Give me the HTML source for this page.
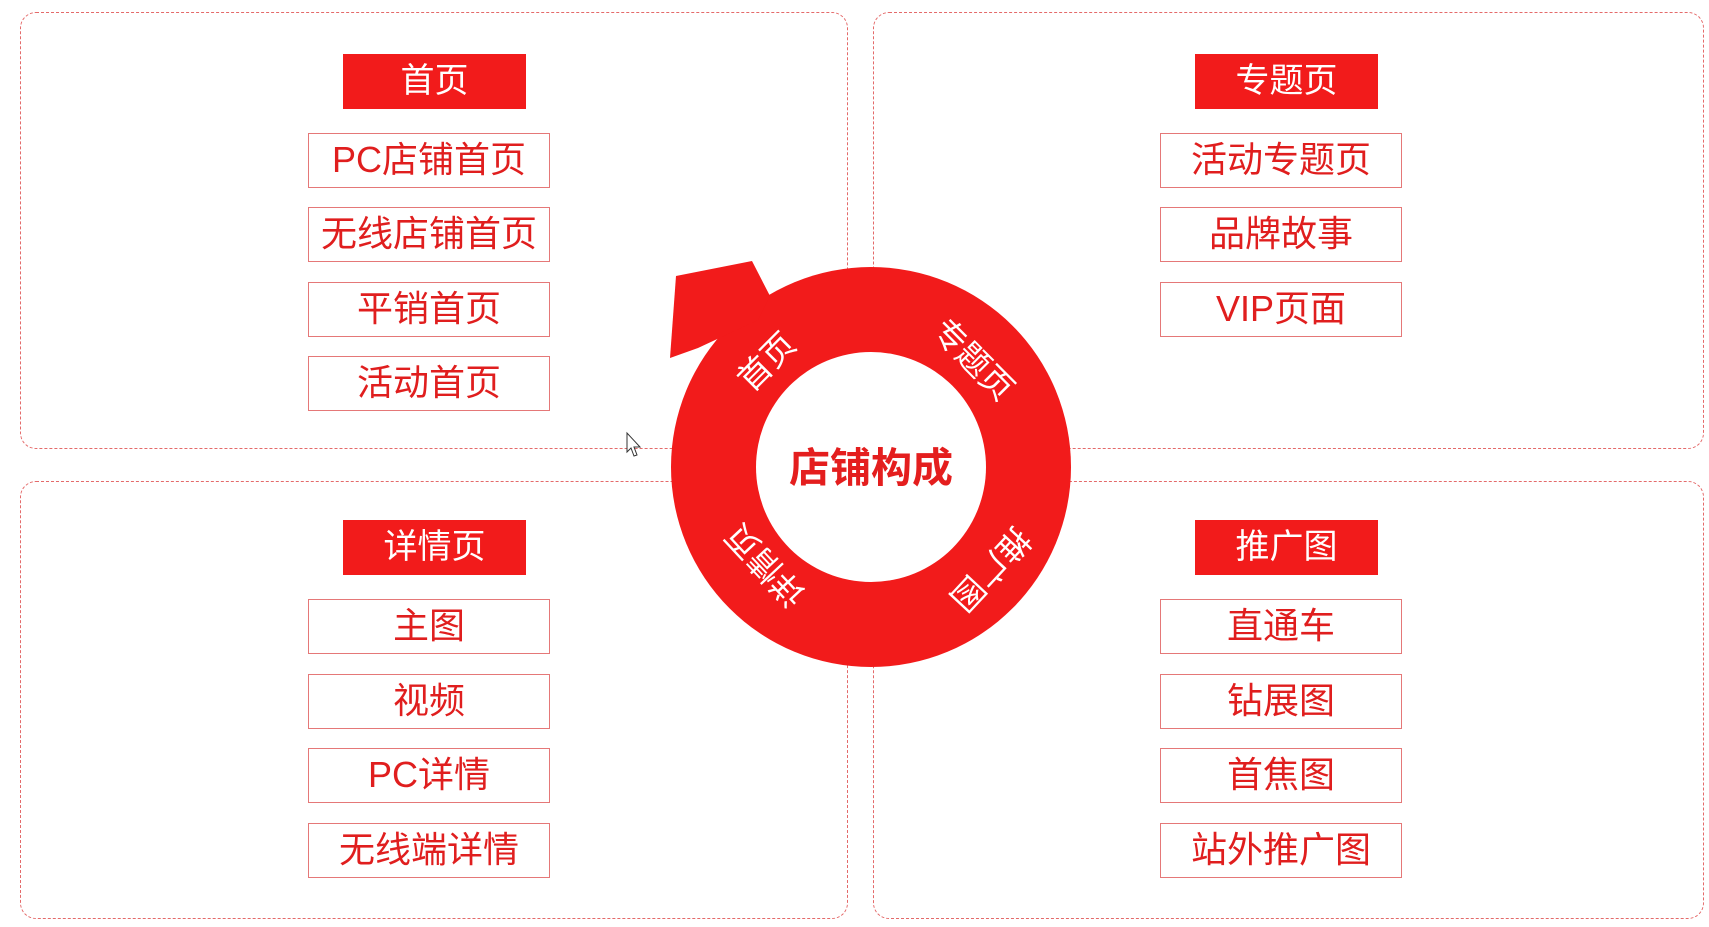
<!DOCTYPE html>
<html><head><meta charset="utf-8"><style>
html,body{margin:0;padding:0;background:#fff;width:1709px;height:927px;overflow:hidden;position:relative;font-family:"Liberation Sans","Noto Sans CJK SC",sans-serif}
.box{position:absolute;border:1.3px dashed #e46a6a;border-radius:16px;box-sizing:border-box}
.hd{position:absolute;background:#f21b1b;color:#fff;font-size:34px;text-align:center;line-height:55px;height:55px;width:183px}
.it{position:absolute;border:1.5px solid #e57878;box-sizing:border-box;color:#e01e1e;font-size:36px;text-align:center;line-height:52px;height:55px;width:242px}
</style></head><body>
<div class="box" style="left:20px;top:12px;width:828px;height:437px"></div>
<div class="box" style="left:873px;top:12px;width:831px;height:437px"></div>
<div class="box" style="left:20px;top:481px;width:828px;height:438px"></div>
<div class="box" style="left:873px;top:481px;width:831px;height:438px"></div>

<div class="hd" style="left:343px;top:54px">首页</div>
<div class="it" style="left:308px;top:133px">PC店铺首页</div>
<div class="it" style="left:308px;top:207px">无线店铺首页</div>
<div class="it" style="left:308px;top:282px">平销首页</div>
<div class="it" style="left:308px;top:356px">活动首页</div>

<div class="hd" style="left:1195px;top:54px">专题页</div>
<div class="it" style="left:1160px;top:133px">活动专题页</div>
<div class="it" style="left:1160px;top:207px">品牌故事</div>
<div class="it" style="left:1160px;top:282px">VIP页面</div>

<div class="hd" style="left:343px;top:520px">详情页</div>
<div class="it" style="left:308px;top:599px">主图</div>
<div class="it" style="left:308px;top:674px">视频</div>
<div class="it" style="left:308px;top:748px">PC详情</div>
<div class="it" style="left:308px;top:823px">无线端详情</div>

<div class="hd" style="left:1195px;top:520px">推广图</div>
<div class="it" style="left:1160px;top:599px">直通车</div>
<div class="it" style="left:1160px;top:674px">钻展图</div>
<div class="it" style="left:1160px;top:748px">首焦图</div>
<div class="it" style="left:1160px;top:823px">站外推广图</div>

<svg style="position:absolute;left:0;top:0" width="1709" height="927">
<circle cx="871" cy="467" r="200" fill="#f21b1b"/>
<polygon points="770,296 752,261 676,276 670,358 698,348 758,320" fill="#f21b1b"/>
<circle cx="871" cy="467" r="115" fill="#fff"/>
<text x="871" y="482" text-anchor="middle" font-size="41" font-weight="bold" fill="#e41e1e" font-family="Liberation Sans,Noto Sans CJK SC,sans-serif">店铺构成</text>
<g fill="#fff" font-size="33" font-family="Liberation Sans,Noto Sans CJK SC,sans-serif" text-anchor="middle">
<text transform="translate(767,362) rotate(-45)" y="11">首页</text>
<text transform="translate(973,360) rotate(45)" y="11">专题页</text>
<text transform="translate(990,569) rotate(133)" y="11">推广图</text>
<text transform="translate(766,565) rotate(227)" y="11">详情页</text>
</g>
<path d="M627 433 L627 452 L631 448 L634 456 L637 455 L634 447 L640 447 Z" fill="#fff" stroke="#333" stroke-width="1"/>
</svg>
</body></html>
